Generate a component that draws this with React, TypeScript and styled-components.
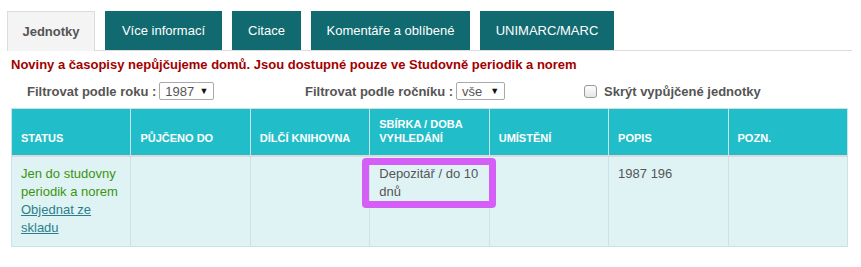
import React from 'react';
import styled, { createGlobalStyle } from 'styled-components';

const tabs = [
  { label: 'Jednotky', width: 88 },
  { label: 'Více informací', width: 117 },
  { label: 'Citace', width: 69 },
  { label: 'Komentáře a oblíbené', width: 159 },
  { label: 'UNIMARC/MARC', width: 134 },
];

const columns = ['Status', 'Půjčeno do', 'Dílčí knihovna', 'Sbírka / doba vyhledání', 'Umístění', 'Popis', 'Pozn.'];

const GlobalStyle = createGlobalStyle`
  body {
    margin: 0;
    background: #fff;
    font-family: 'Liberation Sans', Arial, sans-serif;
  }
`;

const Page = styled.div`
  padding: 11px 9px 0 7px;
`;

const TabBar = styled.div`
  display: flex;
  gap: 10px;
  border-bottom: 1px solid #dcdcdc;
  height: 39px;
`;

const Tab = styled.div<{ active?: boolean; w: number }>`
  display: flex;
  align-items: center;
  justify-content: center;
  width: ${(p) => p.w}px;
  height: ${(p) => (p.active ? '40px' : '39px')};
  box-sizing: border-box;
  font-size: 13px;
  font-weight: ${(p) => (p.active ? 'bold' : 'normal')};
  color: ${(p) => (p.active ? '#555' : '#fff')};
  background: ${(p) => (p.active ? '#f4f4f4' : '#116a70')};
  border: ${(p) => (p.active ? '1px solid #dcdcdc' : 'none')};
  border-bottom: none;
  padding-bottom: 1px;
`;

const Content = styled.div`
  padding: 0 4px;
`;

const Notice = styled.div`
  margin-top: 5px;
  font-size: 13px;
  font-weight: bold;
  color: #a20000;
  line-height: 18px;
`;

const FilterRow = styled.div`
  display: flex;
  align-items: center;
  height: 30px;
  margin-top: 2px;
  padding-left: 16px;
`;

const FilterLabel = styled.label<{ w: number }>`
  display: flex;
  align-items: center;
  gap: 3px;
  width: ${(p) => p.w}px;
  font-size: 13px;
  font-weight: bold;
  color: #555;
`;

const FakeSelect = styled.span<{ w: number }>`
  display: inline-flex;
  align-items: center;
  justify-content: space-between;
  box-sizing: border-box;
  width: ${(p) => p.w}px;
  height: 18px;
  padding: 0 5px 0 5px;
  border: 1px solid #a9a9a9;
  border-radius: 2px;
  font-size: 13px;
  font-weight: normal;
  color: #555;

  &::after {
    content: '▼';
    font-size: 9px;
    color: #111;
  }
`;

const Check = styled.span`
  width: 11px;
  height: 11px;
  border: 1px solid #9a9a9a;
  border-radius: 3px;
  background: linear-gradient(#fdfdfd, #e6e6e6);
  margin-right: 4px;
`;

const Table = styled.table`
  margin-top: 2px;
  width: 837px;
  border-collapse: collapse;
  table-layout: fixed;
  border: 1px solid #c9e4e7;
`;

const Th = styled.th`
  background: #21bec9;
  color: #fff;
  font-size: 11px;
  font-weight: bold;
  text-transform: uppercase;
  text-align: left;
  vertical-align: bottom;
  line-height: 14px;
  padding: 8px 8px 10px 9px;
  border-left: 1px solid #c9e4e7;
  border-bottom: 2px solid #dadada;
  height: 28px;
`;

const Td = styled.td<{ tight?: boolean }>`
  background: #dff3f5;
  vertical-align: top;
  font-size: 13px;
  line-height: 18px;
  color: #555;
  padding: 8px ${(p) => (p.tight ? '2px' : '8px')} 9px 9px;
  border-left: 1px solid #c9e4e7;
  height: 72px;
`;

const Status = styled.span`
  color: #3c9410;
`;

const Link = styled.a`
  color: #2b7f8b;
  text-decoration: underline;
`;

// annotation frame drawn over the cell text
const Highlight = styled.div`
  position: relative;

  &::before {
    content: '';
    position: absolute;
    top: -7px;
    bottom: -7px;
    left: -17px;
    right: -9px;
    border: 7px solid #d45ef6;
    border-radius: 4px;
  }
`;

export default function App() {
  return (
    <Page>
      <GlobalStyle />
      <TabBar>
        {tabs.map((t, i) => (
          <Tab key={t.label} active={i === 0} w={t.width}>
            {t.label}
          </Tab>
        ))}
      </TabBar>
      <Content>
        <Notice>Noviny a časopisy nepůjčujeme domů. Jsou dostupné pouze ve Studovně periodik a norem</Notice>
        <FilterRow>
          <FilterLabel w={278}>
            Filtrovat podle roku : <FakeSelect w={55}>1987</FakeSelect>
          </FilterLabel>
          <FilterLabel w={279}>
            Filtrovat podle ročníku : <FakeSelect w={49}>vše</FakeSelect>
          </FilterLabel>
          <FilterLabel w={200}>
            <Check />
            Skrýt vypůjčené jednotky
          </FilterLabel>
        </FilterRow>
        <Table>
          <thead>
            <tr>
              {columns.map((c) => (
                <Th key={c}>{c}</Th>
              ))}
            </tr>
          </thead>
          <tbody>
            <tr>
              <Td>
                <Status>Jen do studovny periodik a norem</Status>
                <br />
                <Link href="#">Objednat ze skladu</Link>
              </Td>
              <Td />
              <Td />
              <Td tight>
                <Highlight>Depozitář / do 10 dnů</Highlight>
              </Td>
              <Td />
              <Td>1987 196</Td>
              <Td />
            </tr>
          </tbody>
        </Table>
      </Content>
    </Page>
  );
}
